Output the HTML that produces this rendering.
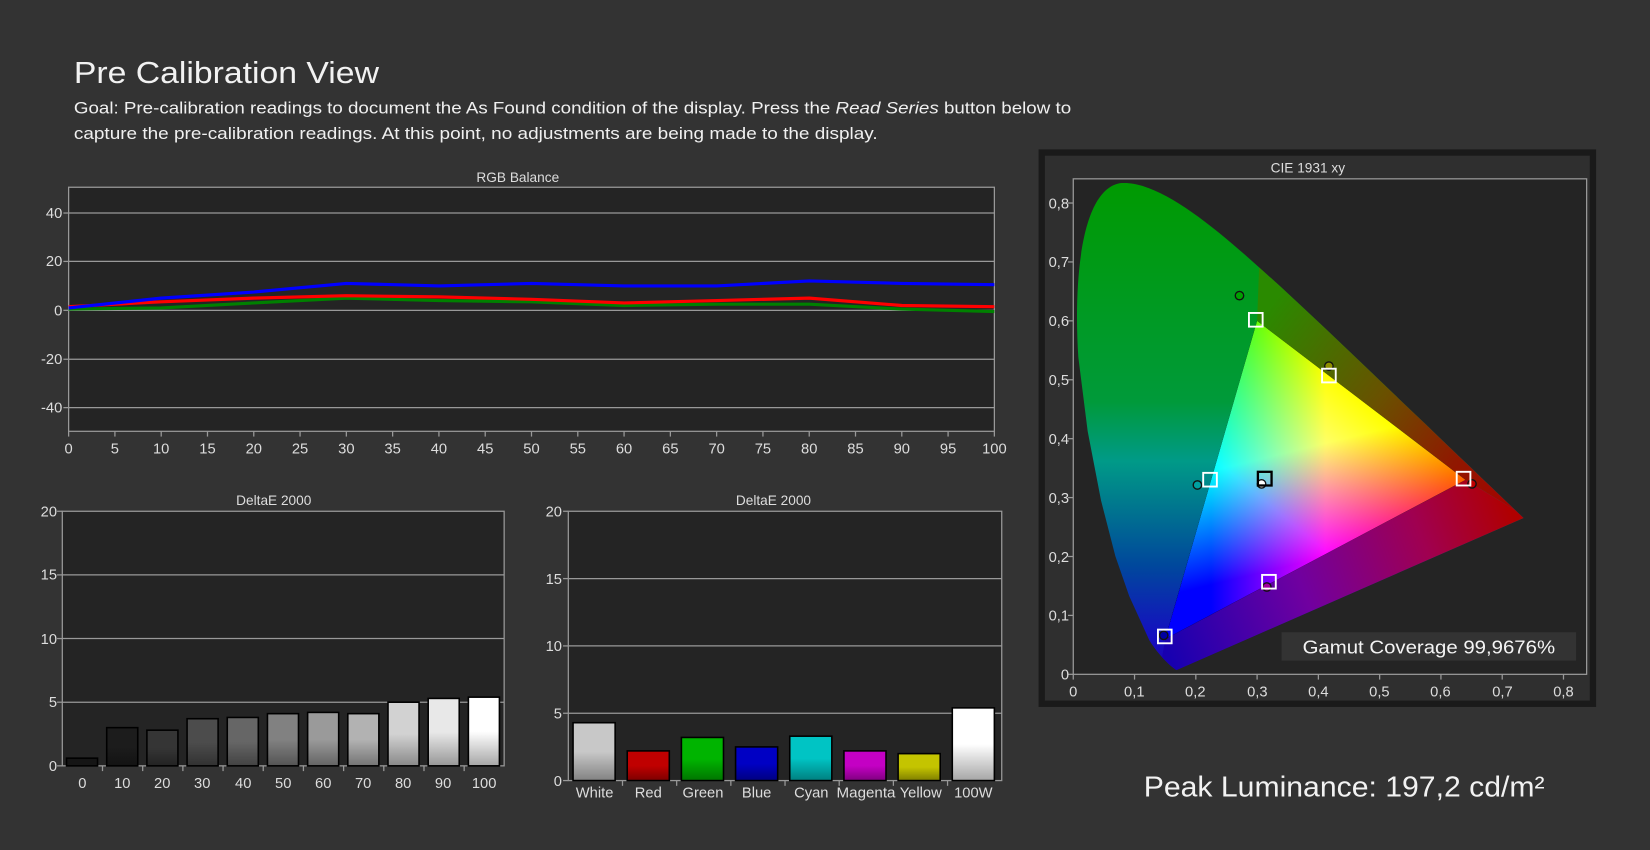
<!DOCTYPE html>
<html><head><meta charset="utf-8"><style>
html,body{margin:0;padding:0;background:#333;width:1650px;height:850px;overflow:hidden}
svg{display:block}
text{font-family:"Liberation Sans",sans-serif;fill:#ddd}
</style></head><body>
<svg width="1650" height="850" viewBox="0 0 1568 808" xmlns="http://www.w3.org/2000/svg">
<defs>
<linearGradient id="shade" x1="0" y1="0" x2="0" y2="1"><stop offset="0.5" stop-color="#000" stop-opacity="0"/><stop offset="1" stop-color="#000" stop-opacity="0.35"/></linearGradient>
<linearGradient id="base" gradientUnits="userSpaceOnUse" x1="0" y1="170" x2="0" y2="641">
<stop offset="0" stop-color="#009a00"/><stop offset="0.45" stop-color="#009a3a"/><stop offset="0.57" stop-color="#009a88"/><stop offset="0.64" stop-color="#007f8c"/><stop offset="0.78" stop-color="#00489c"/><stop offset="0.92" stop-color="#1410c0"/><stop offset="1" stop-color="#2000b0"/></linearGradient>
<linearGradient id="rside" gradientUnits="userSpaceOnUse" x1="1200" y1="300" x2="1440" y2="490">
<stop offset="0" stop-color="#2a8a00"/><stop offset="0.45" stop-color="#6a5000"/><stop offset="0.75" stop-color="#901800"/><stop offset="1" stop-color="#a80000"/></linearGradient>
<linearGradient id="bside" gradientUnits="userSpaceOnUse" x1="1110" y1="620" x2="1440" y2="495">
<stop offset="0" stop-color="#1800b0"/><stop offset="0.4" stop-color="#7000a0"/><stop offset="0.75" stop-color="#a00050"/><stop offset="1" stop-color="#b00000"/></linearGradient>
<linearGradient id="gr" gradientUnits="userSpaceOnUse" x1="1392.8" y1="456.2" x2="1151.1" y2="456.2"><stop offset="0" stop-color="#f00"/><stop offset="0.55" stop-color="#f00"/><stop offset="1" stop-color="#000"/></linearGradient>
<linearGradient id="gg" gradientUnits="userSpaceOnUse" x1="1194.75" y1="305" x2="1250.1" y2="531.8"><stop offset="0" stop-color="#0f0"/><stop offset="0.55" stop-color="#0f0"/><stop offset="1" stop-color="#000"/></linearGradient>
<linearGradient id="gb" gradientUnits="userSpaceOnUse" x1="1107.4" y1="607.4" x2="1293.8" y2="380.6"><stop offset="0" stop-color="#00f"/><stop offset="0.55" stop-color="#00f"/><stop offset="1" stop-color="#000"/></linearGradient>
<clipPath id="hs"><path d="M1118,637 C1108,630 1098,618 1092.3,608.6 L1073.2,566.7 1060,528.6 1046.4,475.8 1033.7,409.9 1024.8,339.5 C1020,265 1028,178 1066,174 C1100,172 1150,212 1195.7,253.3 L1216.5,272 1237.3,291.3 1258.1,310.8 1278.7,330.4 1298.9,349.7 1318.5,368.5 1337.3,386.5 1355.1,403.4 1371.2,419 1385.2,432.4 1397.6,444.2 1407.8,454 1416.2,462 1448,492.4 Z"/></clipPath>
</defs>

<!-- Header -->
<text x="70" y="79" style="font-size:29px;fill:#f2f2f2" textLength="290" lengthAdjust="spacingAndGlyphs">Pre Calibration View</text>
<text x="70" y="108" style="font-size:16px;fill:#f0f0f0" textLength="948" lengthAdjust="spacingAndGlyphs">Goal: Pre-calibration readings to document the As Found condition of the display. Press the <tspan font-style="italic">Read Series</tspan> button below to</text>
<text x="70" y="132" style="font-size:16px;fill:#f0f0f0" textLength="764" lengthAdjust="spacingAndGlyphs">capture the pre-calibration readings. At this point, no adjustments are being made to the display.</text>

<!-- RGB Balance -->
<text x="492" y="173" text-anchor="middle" style="font-size:13px">RGB Balance</text>
<rect x="65" y="178" width="880" height="232" fill="#242424" stroke="#999" stroke-width="1.2"/>
<g stroke="#999" stroke-width="1.2">
<line x1="65" y1="202.5" x2="945" y2="202.5"/><line x1="65" y1="248.5" x2="945" y2="248.5"/><line x1="65" y1="295" x2="945" y2="295"/><line x1="65" y1="341.5" x2="945" y2="341.5"/><line x1="65" y1="387.5" x2="945" y2="387.5"/>
<line x1="60" y1="202.5" x2="65" y2="202.5"/><line x1="60" y1="248.5" x2="65" y2="248.5"/><line x1="60" y1="295" x2="65" y2="295"/><line x1="60" y1="341.5" x2="65" y2="341.5"/><line x1="60" y1="387.5" x2="65" y2="387.5"/>
</g>
<g style="font-size:14px" text-anchor="end">
<text x="59" y="207">40</text><text x="59" y="253">20</text><text x="59" y="300">0</text><text x="59" y="346">-20</text><text x="59" y="392">-40</text>
</g>
<g stroke="#999" stroke-width="1.2">
<line x1="65" y1="410" x2="65" y2="415"/><line x1="109" y1="410" x2="109" y2="415"/><line x1="153" y1="410" x2="153" y2="415"/><line x1="197" y1="410" x2="197" y2="415"/><line x1="241" y1="410" x2="241" y2="415"/><line x1="285" y1="410" x2="285" y2="415"/><line x1="329" y1="410" x2="329" y2="415"/><line x1="373" y1="410" x2="373" y2="415"/><line x1="417" y1="410" x2="417" y2="415"/><line x1="461" y1="410" x2="461" y2="415"/><line x1="505" y1="410" x2="505" y2="415"/><line x1="549" y1="410" x2="549" y2="415"/><line x1="593" y1="410" x2="593" y2="415"/><line x1="637" y1="410" x2="637" y2="415"/><line x1="681" y1="410" x2="681" y2="415"/><line x1="725" y1="410" x2="725" y2="415"/><line x1="769" y1="410" x2="769" y2="415"/><line x1="813" y1="410" x2="813" y2="415"/><line x1="857" y1="410" x2="857" y2="415"/><line x1="901" y1="410" x2="901" y2="415"/><line x1="945" y1="410" x2="945" y2="415"/>
</g>
<g style="font-size:14px" text-anchor="middle">
<text x="65" y="431">0</text><text x="109" y="431">5</text><text x="153" y="431">10</text><text x="197" y="431">15</text><text x="241" y="431">20</text><text x="285" y="431">25</text><text x="329" y="431">30</text><text x="373" y="431">35</text><text x="417" y="431">40</text><text x="461" y="431">45</text><text x="505" y="431">50</text><text x="549" y="431">55</text><text x="593" y="431">60</text><text x="637" y="431">65</text><text x="681" y="431">70</text><text x="725" y="431">75</text><text x="769" y="431">80</text><text x="813" y="431">85</text><text x="857" y="431">90</text><text x="901" y="431">95</text><text x="945" y="431">100</text>
</g>
<g fill="none" stroke-width="3" stroke-linejoin="round">
<polyline stroke="#008000" points="65,293.8 153,292.7 241,288 329,283.4 417,285.7 505,286.9 593,290.4 681,289.2 769,289.2 857,293.8 945,296.2"/>
<polyline stroke="#ff0000" points="65,291.5 153,286.9 241,283.4 329,281.1 417,282.2 505,284.5 593,288 681,285.7 769,283.4 857,290.4 945,291.5"/>
<polyline stroke="#0000ff" points="65,292.7 153,283.4 241,277.6 329,269.4 417,271.8 505,269.4 593,271.8 681,271.8 769,267.1 857,269.4 945,270.6"/>
</g>

<!-- DeltaE left -->
<text x="260" y="480" text-anchor="middle" style="font-size:13px">DeltaE 2000</text>
<rect x="59" y="486" width="420" height="242" fill="#242424" stroke="#999" stroke-width="1.2"/>
<g stroke="#999" stroke-width="1.2">
<line x1="59" y1="546.5" x2="479" y2="546.5"/><line x1="59" y1="607" x2="479" y2="607"/><line x1="59" y1="667.5" x2="479" y2="667.5"/>
<line x1="54" y1="486" x2="59" y2="486"/><line x1="54" y1="546.5" x2="59" y2="546.5"/><line x1="54" y1="607" x2="59" y2="607"/><line x1="54" y1="667.5" x2="59" y2="667.5"/><line x1="54" y1="728" x2="59" y2="728"/>
</g>
<g style="font-size:14px" text-anchor="end">
<text x="54" y="491">20</text><text x="54" y="551">15</text><text x="54" y="612">10</text><text x="54" y="672">5</text><text x="54" y="733">0</text>
</g>
<g stroke="#000" stroke-width="1.5">
<rect x="63" y="720.7" width="29.5" height="7.3" fill="#151515"/>
<rect x="101.2" y="691.7" width="29.5" height="36.3" fill="#1c1c1c"/>
<rect x="139.4" y="694.1" width="29.5" height="33.9" fill="#353535"/>
<rect x="177.6" y="683.2" width="29.5" height="44.8" fill="#4c4c4c"/>
<rect x="215.8" y="682" width="29.5" height="46" fill="#666"/>
<rect x="254" y="678.4" width="29.5" height="49.6" fill="#818181"/>
<rect x="292.2" y="677.2" width="29.5" height="50.8" fill="#9a9a9a"/>
<rect x="330.4" y="678.4" width="29.5" height="49.6" fill="#b2b2b2"/>
<rect x="368.6" y="667.5" width="29.5" height="60.5" fill="#d2d2d2"/>
<rect x="406.8" y="663.9" width="29.5" height="64.1" fill="#e8e8e8"/>
<rect x="445" y="662.7" width="29.5" height="65.3" fill="#fff"/>
</g>
<g>
<rect x="101.2" y="691.7" width="29.5" height="36.3" fill="url(#shade)"/><rect x="139.4" y="694.1" width="29.5" height="33.9" fill="url(#shade)"/><rect x="177.6" y="683.2" width="29.5" height="44.8" fill="url(#shade)"/><rect x="215.8" y="682" width="29.5" height="46" fill="url(#shade)"/><rect x="254" y="678.4" width="29.5" height="49.6" fill="url(#shade)"/><rect x="292.2" y="677.2" width="29.5" height="50.8" fill="url(#shade)"/><rect x="330.4" y="678.4" width="29.5" height="49.6" fill="url(#shade)"/><rect x="368.6" y="667.5" width="29.5" height="60.5" fill="url(#shade)"/><rect x="406.8" y="663.9" width="29.5" height="64.1" fill="url(#shade)"/><rect x="445" y="662.7" width="29.5" height="65.3" fill="url(#shade)"/>
</g>
<g stroke="#999" stroke-width="1.2">
<line x1="97.2" y1="728" x2="97.2" y2="733"/><line x1="135.4" y1="728" x2="135.4" y2="733"/><line x1="173.6" y1="728" x2="173.6" y2="733"/><line x1="211.8" y1="728" x2="211.8" y2="733"/><line x1="250" y1="728" x2="250" y2="733"/><line x1="288.2" y1="728" x2="288.2" y2="733"/><line x1="326.4" y1="728" x2="326.4" y2="733"/><line x1="364.6" y1="728" x2="364.6" y2="733"/><line x1="402.8" y1="728" x2="402.8" y2="733"/><line x1="441" y1="728" x2="441" y2="733"/>
</g>
<g style="font-size:14px" text-anchor="middle">
<text x="78" y="749">0</text><text x="116" y="749">10</text><text x="154" y="749">20</text><text x="192" y="749">30</text><text x="231" y="749">40</text><text x="269" y="749">50</text><text x="307" y="749">60</text><text x="345" y="749">70</text><text x="383" y="749">80</text><text x="421" y="749">90</text><text x="460" y="749">100</text>
</g>

<!-- DeltaE right -->
<text x="735" y="480" text-anchor="middle" style="font-size:13px">DeltaE 2000</text>
<rect x="540" y="486" width="412" height="256" fill="#242424" stroke="#999" stroke-width="1.2"/>
<g stroke="#999" stroke-width="1.2">
<line x1="540" y1="550" x2="952" y2="550"/><line x1="540" y1="614" x2="952" y2="614"/><line x1="540" y1="678" x2="952" y2="678"/>
<line x1="535" y1="486" x2="540" y2="486"/><line x1="535" y1="550" x2="540" y2="550"/><line x1="535" y1="614" x2="540" y2="614"/><line x1="535" y1="678" x2="540" y2="678"/><line x1="535" y1="742" x2="540" y2="742"/>
</g>
<g style="font-size:14px" text-anchor="end">
<text x="534" y="491">20</text><text x="534" y="555">15</text><text x="534" y="619">10</text><text x="534" y="683">5</text><text x="534" y="747">0</text>
</g>
<g stroke="#000" stroke-width="1.5">
<rect x="544.5" y="687" width="40" height="55" fill="#c8c8c8"/>
<rect x="596" y="713.8" width="40" height="28.2" fill="#c00000"/>
<rect x="647.5" y="701" width="40" height="41" fill="#00b400"/>
<rect x="699" y="710" width="40" height="32" fill="#0000c4"/>
<rect x="750.5" y="699.8" width="40" height="42.2" fill="#00c4c4"/>
<rect x="802" y="713.8" width="40" height="28.2" fill="#c400c4"/>
<rect x="853.5" y="716.4" width="40" height="25.6" fill="#c4c400"/>
<rect x="905" y="672.9" width="40" height="69.1" fill="#fff"/>
</g>
<g>
<rect x="544.5" y="687" width="40" height="55" fill="url(#shade)"/><rect x="596" y="713.8" width="40" height="28.2" fill="url(#shade)"/><rect x="647.5" y="701" width="40" height="41" fill="url(#shade)"/><rect x="699" y="710" width="40" height="32" fill="url(#shade)"/><rect x="750.5" y="699.8" width="40" height="42.2" fill="url(#shade)"/><rect x="802" y="713.8" width="40" height="28.2" fill="url(#shade)"/><rect x="853.5" y="716.4" width="40" height="25.6" fill="url(#shade)"/><rect x="905" y="672.9" width="40" height="69.1" fill="url(#shade)"/>
</g>
<g stroke="#999" stroke-width="1.2">
<line x1="591.5" y1="742" x2="591.5" y2="747"/><line x1="643" y1="742" x2="643" y2="747"/><line x1="694.5" y1="742" x2="694.5" y2="747"/><line x1="746" y1="742" x2="746" y2="747"/><line x1="797.5" y1="742" x2="797.5" y2="747"/><line x1="849" y1="742" x2="849" y2="747"/><line x1="900.5" y1="742" x2="900.5" y2="747"/>
</g>
<g style="font-size:14px" text-anchor="middle">
<text x="565" y="758">White</text><text x="616" y="758">Red</text><text x="668" y="758">Green</text><text x="719" y="758">Blue</text><text x="771" y="758">Cyan</text><text x="823" y="758" textLength="56" lengthAdjust="spacingAndGlyphs">Magenta</text><text x="875" y="758">Yellow</text><text x="925" y="758">100W</text>
</g>

<!-- CIE -->
<rect x="987" y="142" width="530" height="530" fill="#1a1a1a"/>
<rect x="993" y="148" width="518" height="518" fill="#2f2f2f"/>
<text x="1243" y="164" text-anchor="middle" style="font-size:13px">CIE 1931 xy</text>
<rect x="1020" y="170" width="488" height="471" fill="#242424" stroke="#999" stroke-width="1.2"/>
<g clip-path="url(#hs)">
<rect x="1015" y="165" width="450" height="480" fill="url(#base)"/>
<polygon points="1194.75,305 1200,165 1465,165 1465,500 1392.8,456.2" fill="url(#rside)"/>
<polygon points="1107.4,607.4 1392.8,456.2 1465,500 1465,650 1100,650" fill="url(#bside)"/>
</g>
<g style="isolation:isolate">
<polygon points="1392.8,456.2 1194.75,305 1107.4,607.4" fill="#000"/>
<polygon points="1392.8,456.2 1194.75,305 1107.4,607.4" fill="url(#gr)" style="mix-blend-mode:screen"/>
<polygon points="1392.8,456.2 1194.75,305 1107.4,607.4" fill="url(#gg)" style="mix-blend-mode:screen"/>
<polygon points="1392.8,456.2 1194.75,305 1107.4,607.4" fill="url(#gb)" style="mix-blend-mode:screen"/>
</g>
<g stroke="#999" stroke-width="1.2">
<line x1="1015" y1="641" x2="1020" y2="641"/><line x1="1015" y1="585" x2="1020" y2="585"/><line x1="1015" y1="529" x2="1020" y2="529"/><line x1="1015" y1="473" x2="1020" y2="473"/><line x1="1015" y1="417" x2="1020" y2="417"/><line x1="1015" y1="361" x2="1020" y2="361"/><line x1="1015" y1="305" x2="1020" y2="305"/><line x1="1015" y1="249" x2="1020" y2="249"/><line x1="1015" y1="193" x2="1020" y2="193"/>
<line x1="1020" y1="641" x2="1020" y2="646"/><line x1="1078.25" y1="641" x2="1078.25" y2="646"/><line x1="1136.5" y1="641" x2="1136.5" y2="646"/><line x1="1194.75" y1="641" x2="1194.75" y2="646"/><line x1="1253" y1="641" x2="1253" y2="646"/><line x1="1311.25" y1="641" x2="1311.25" y2="646"/><line x1="1369.5" y1="641" x2="1369.5" y2="646"/><line x1="1427.75" y1="641" x2="1427.75" y2="646"/><line x1="1486" y1="641" x2="1486" y2="646"/>
</g>
<g style="font-size:14px" text-anchor="end">
<text x="1016" y="646">0</text><text x="1016" y="590">0,1</text><text x="1016" y="534">0,2</text><text x="1016" y="478">0,3</text><text x="1016" y="422">0,4</text><text x="1016" y="366">0,5</text><text x="1016" y="310">0,6</text><text x="1016" y="254">0,7</text><text x="1016" y="198">0,8</text>
</g>
<g style="font-size:14px" text-anchor="middle">
<text x="1020" y="662">0</text><text x="1078" y="662">0,1</text><text x="1136" y="662">0,2</text><text x="1195" y="662">0,3</text><text x="1253" y="662">0,4</text><text x="1311" y="662">0,5</text><text x="1369" y="662">0,6</text><text x="1428" y="662">0,7</text><text x="1486" y="662">0,8</text>
</g>
<!-- markers -->
<g fill="none" stroke-width="1.3" stroke="#111">
<circle cx="1178" cy="281" r="4" fill="#00a000"/>
<circle cx="1263" cy="348" r="4" fill="#909000"/>
<circle cx="1399" cy="460" r="4" fill="#c00000"/>
<circle cx="1138" cy="461" r="4" fill="#00a0a0"/>
<circle cx="1199" cy="460" r="4" fill="#fff"/>
<circle cx="1204" cy="558" r="4" fill="#a000a0"/>
<circle cx="1106" cy="604" r="4" fill="#0000a0"/>
</g>
<g fill="none" stroke-width="1.8" stroke="#fff">
<rect x="1187" y="297.5" width="13" height="13"/>
<rect x="1256.5" y="350.5" width="13" height="13"/>
<rect x="1384.5" y="448.5" width="13" height="13"/>
<rect x="1143.5" y="449.5" width="13" height="13"/>
<rect x="1199.5" y="546.5" width="13" height="13"/>
<rect x="1100.5" y="598.5" width="13" height="13"/>
<rect x="1195.5" y="448.5" width="13" height="13" stroke="#000" stroke-width="2.2"/>
</g>
<rect x="1218" y="601" width="280" height="27" fill="#333"/>
<text x="1238" y="621" style="font-size:17.5px;fill:#f4f4f4" textLength="240" lengthAdjust="spacingAndGlyphs">Gamut Coverage 99,9676%</text>

<text x="1087" y="757" style="font-size:27px;fill:#f2f2f2" textLength="381" lengthAdjust="spacingAndGlyphs">Peak Luminance: 197,2 cd/m²</text>
</svg>
</body></html>
